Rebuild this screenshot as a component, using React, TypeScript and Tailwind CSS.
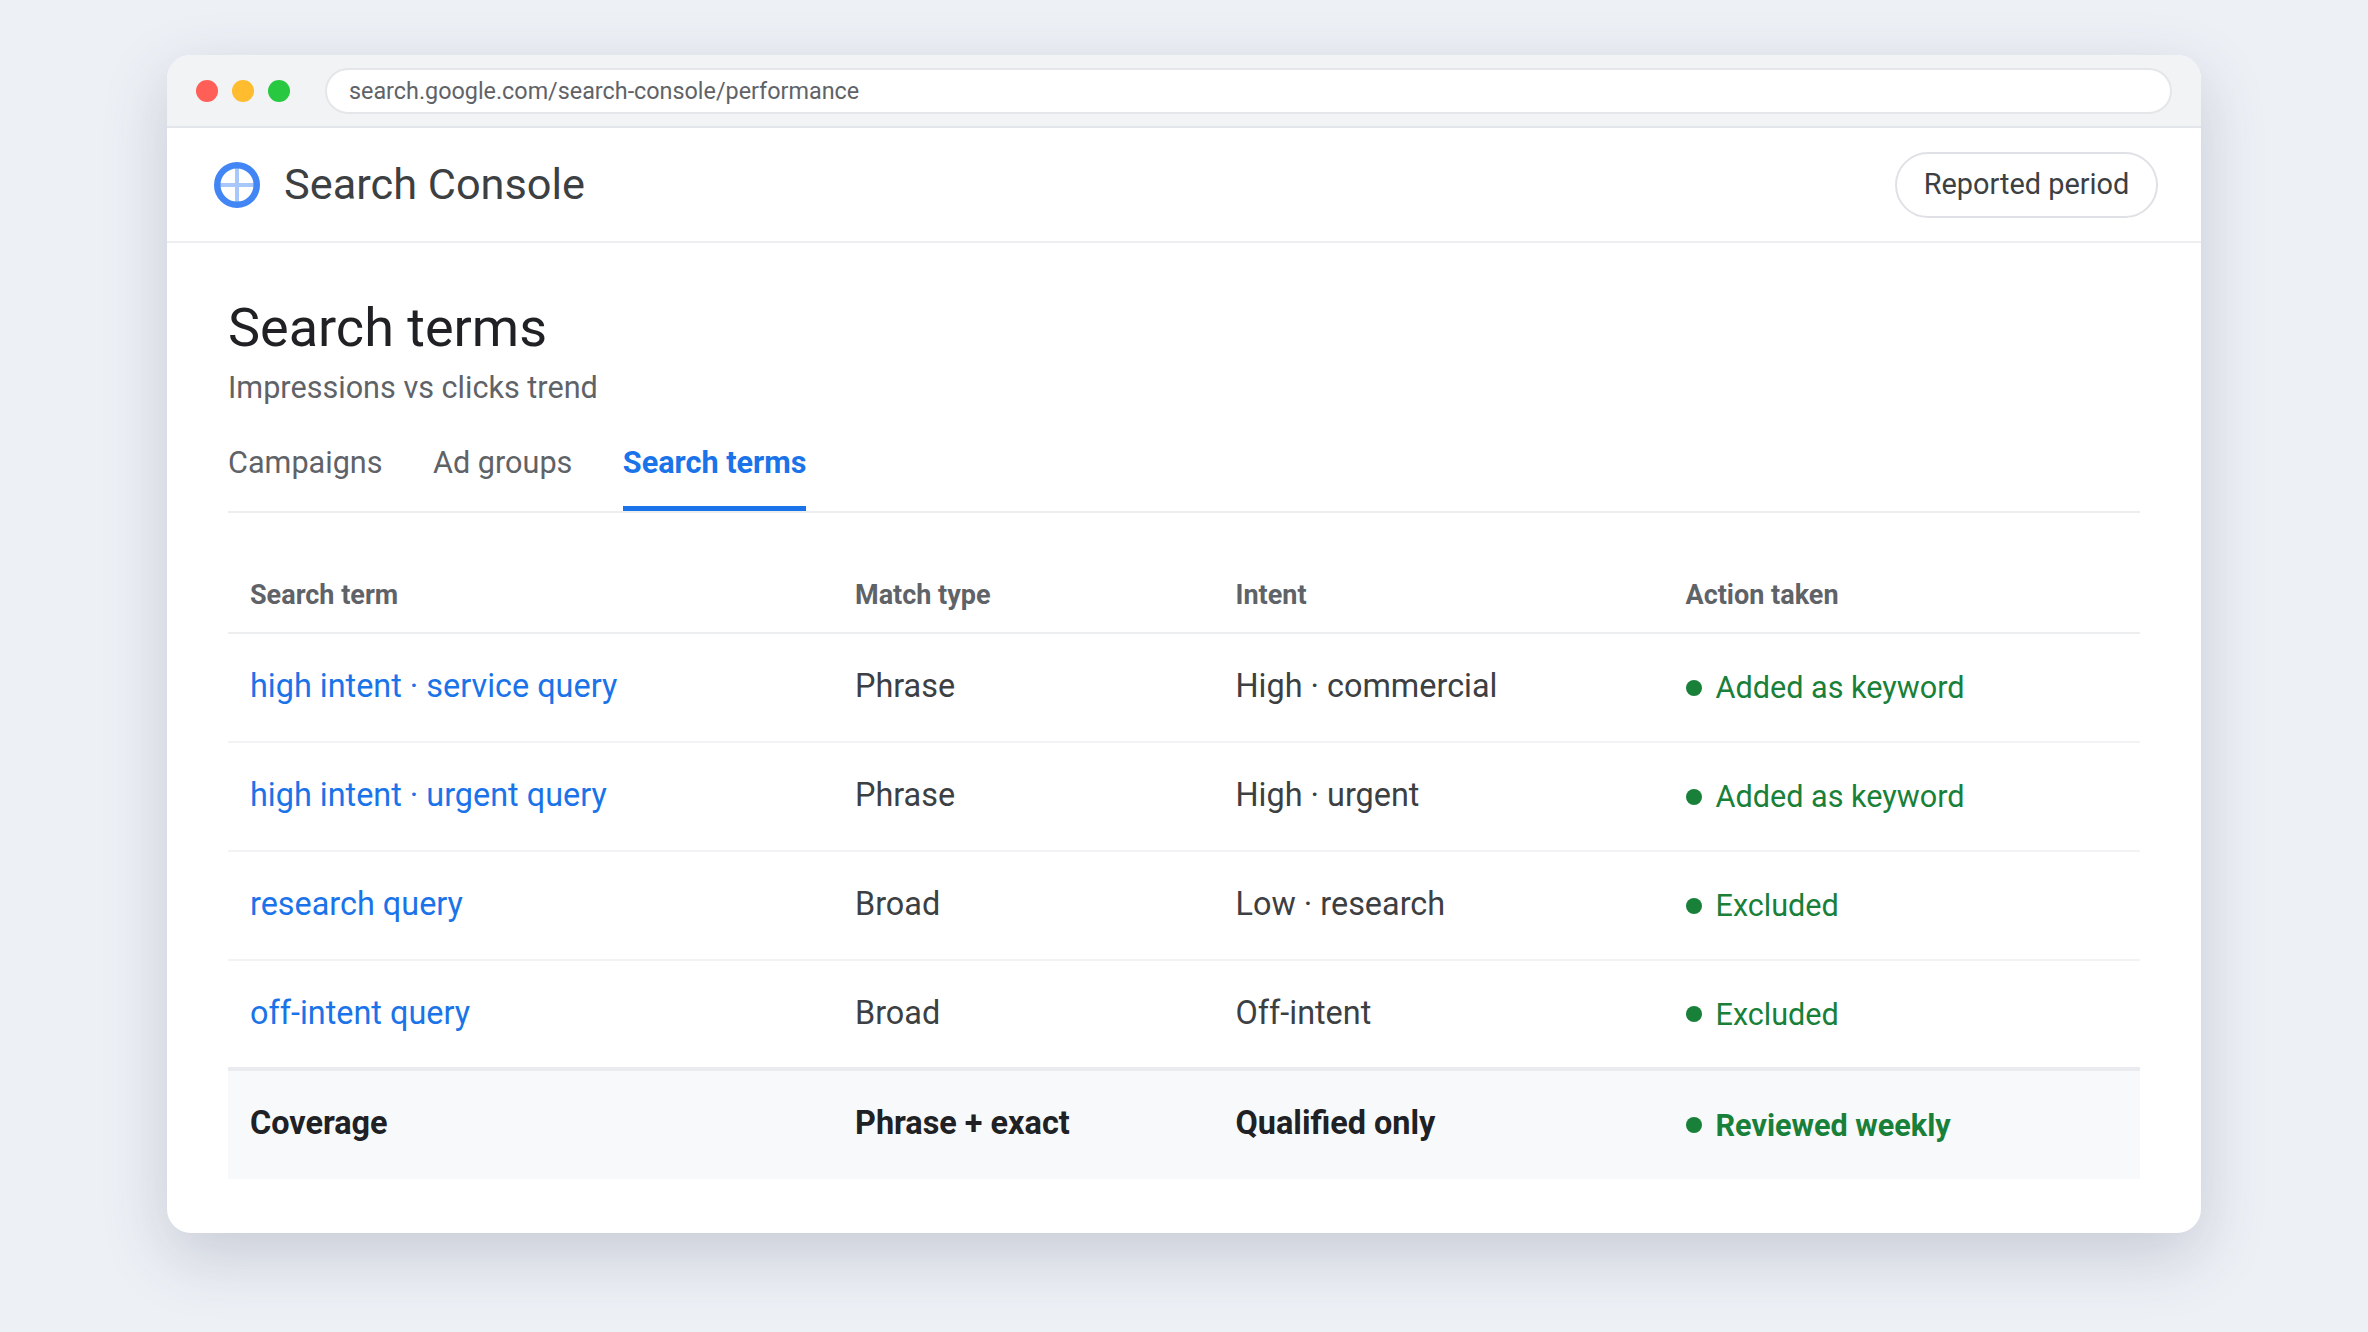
const rows = [
  { term: "high intent · service query", match: "Phrase", intent: "High · commercial", action: "Added as keyword" },
  { term: "high intent · urgent query", match: "Phrase", intent: "High · urgent", action: "Added as keyword" },
  { term: "research query", match: "Broad", intent: "Low · research", action: "Excluded" },
  { term: "off-intent query", match: "Broad", intent: "Off-intent", action: "Excluded" },
]

function Action({ label, bold }: { label: string; bold?: boolean }) {
  return (
    <span className={`flex items-center gap-[14px] pt-[1px] text-[30.6px] text-[#188038] ${bold ? "font-bold" : ""}`}>
      <span className="h-[16px] w-[16px] shrink-0 rounded-full bg-[#188038]" />
      {label}
    </span>
  )
}

function Logo() {
  return (
    <svg width="46" height="46" viewBox="0 0 46 46" fill="none" className="mt-[1px]">
      <path d="M23 3V43M3 23H43" stroke="#a8c7fa" strokeWidth="4" />
      <circle cx="23" cy="23" r="19.75" stroke="#4285f4" strokeWidth="6.5" />
    </svg>
  )
}

export default function App() {
  return (
    <div className="min-h-screen bg-[#edf0f5] pl-[167px] pt-[55px] font-['Roboto',sans-serif]">
      <div className="h-[1178px] w-[2034px] overflow-hidden rounded-[24px] bg-white shadow-[0_22px_64px_rgba(60,64,100,0.21)]">
        <div className="flex h-[73px] items-center border-b-2 border-[#e2e5ea] bg-[#f1f3f5] pl-[29px] pr-[29px]">
          <div className="flex gap-[14px]">
            <span className="h-[22px] w-[22px] rounded-full bg-[#ff5f57]" />
            <span className="h-[22px] w-[22px] rounded-full bg-[#febc2e]" />
            <span className="h-[22px] w-[22px] rounded-full bg-[#28c840]" />
          </div>
          <div className="ml-[35px] flex h-[46px] flex-1 items-center rounded-full border-2 border-[#e4e6ea] bg-white pl-[22px] pt-[2px] text-[23.35px] text-[#5f6368]">
            search.google.com/search-console/performance
          </div>
        </div>

        <div className="flex h-[115px] items-center justify-between border-b-2 border-[#eceef0] pl-[47px] pr-[43px]">
          <div className="flex items-center gap-[24px]">
            <Logo />
            <span className="pt-[2px] text-[43.3px] text-[#3c4043]">Search Console</span>
          </div>
          <button className="h-[66px] w-[263px] rounded-full border-2 border-[#dfe1e6] bg-white text-[28.9px] text-[#3c4043]">
            Reported period
          </button>
        </div>

        <div className="px-[61px] pt-[50px]">
          <h1 className="text-[54px] leading-[70px] text-[#202124]">Search terms</h1>
          <p className="mt-[5px] text-[30.6px] leading-[40px] text-[#5f6368]">Impressions vs clicks trend</p>

          <div className="mt-[29px] flex h-[76px] gap-[50.5px] border-b-2 border-[#eceef0] text-[30.6px] leading-[40px] text-[#5f6368]">
            <span className="pt-[6px]">Campaigns</span>
            <span className="pt-[6px]">Ad groups</span>
            <span className="border-b-[5px] border-[#1a73e8] pt-[6px] font-bold text-[#1a73e8]">Search terms</span>
          </div>

          <table className="w-full table-fixed border-collapse text-[32.4px] text-[#3c4043]">
            <colgroup>
              <col className="w-[605px]" />
              <col className="w-[380.5px]" />
              <col className="w-[450px]" />
              <col />
            </colgroup>
            <thead>
              <tr className="h-[120px] border-b-2 border-[#eceef0] text-left text-[27px] text-[#5f6368]">
                <th className="pl-[22px] pt-[46px] font-bold">Search term</th>
                <th className="pl-[22px] pt-[46px] font-bold">Match type</th>
                <th className="pl-[22px] pt-[46px] font-bold">Intent</th>
                <th className="pl-[22px] pt-[46px] font-bold">Action taken</th>
              </tr>
            </thead>
            <tbody>
              {rows.map((r) => (
                <tr key={r.term} className="h-[109px] border-b-2 border-[#f1f3f4]">
                  <td className="pb-[2px] pl-[22px] text-[#1a73e8]">{r.term}</td>
                  <td className="pb-[2px] pl-[22px]">{r.match}</td>
                  <td className="pb-[2px] pl-[22px]">{r.intent}</td>
                  <td className="pl-[22px]"><Action label={r.action} /></td>
                </tr>
              ))}
              <tr className="h-[110px] border-t-4 border-[#e9ebee] bg-[#f8f9fb] font-bold text-[#202124]">
                <td className="pb-[3px] pl-[22px]">Coverage</td>
                <td className="pb-[3px] pl-[22px]">Phrase + exact</td>
                <td className="pb-[3px] pl-[22px]">Qualified only</td>
                <td className="pl-[22px]"><Action label="Reviewed weekly" bold /></td>
              </tr>
            </tbody>
          </table>
        </div>
      </div>
    </div>
  )
}
